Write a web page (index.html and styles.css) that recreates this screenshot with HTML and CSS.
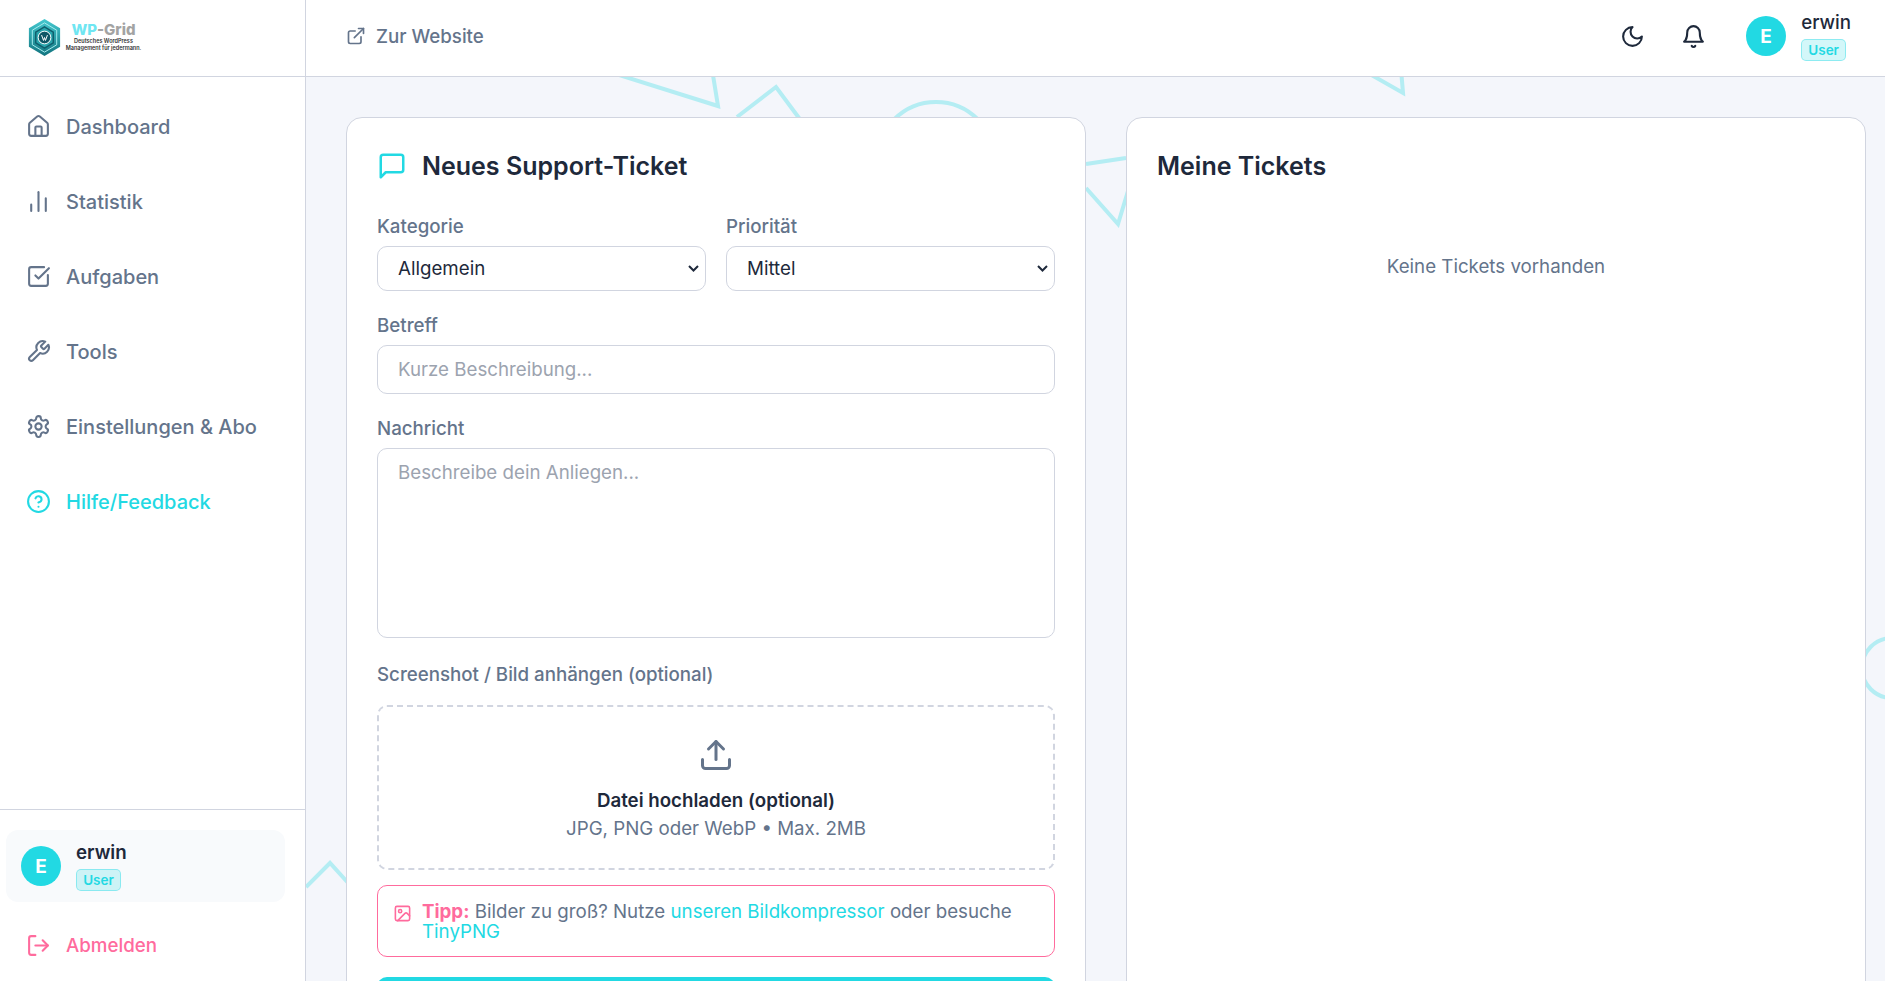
FILE: index.html
```html
<!DOCTYPE html>
<html lang="de">
<head>
  <meta charset="UTF-8">
  <title>Support - WP-Grid</title>
  <link rel="stylesheet" href="styles.css">
</head>
<body>
  <div class="app-shell">
    <aside class="sidebar">
      <div class="logo-bar">
        <svg class="logo-mark" viewBox="0 0 40 40" aria-hidden="true">
          <defs>
            <linearGradient id="logoFill" x1="0" y1="0" x2="0" y2="1">
              <stop offset="0" stop-color="#45c9d0"/>
              <stop offset="1" stop-color="#12747f"/>
            </linearGradient>
          </defs>
          <polygon points="20,1 36,10.500 36,29.500 20,39 4,29.500 4,10.500" fill="url(#logoFill)"/>
          <polygon points="20,5 32.500,12.500 32.500,27.500 20,35 7.500,27.500 7.500,12.500" fill="none" stroke="#a8eef0" stroke-width="1"/>
          <polygon points="20,9 29,14.500 29,25.500 20,31 11,25.500 11,14.500" fill="#2aa5ad" stroke="#0f5e6c" stroke-width="1.500"/>
          <circle cx="20" cy="20" r="6.500" fill="#0f5666" stroke="#fff" stroke-width="1"/>
          <path d="M17 17.500l2 5.500 1-3 1 3 2-5.500" fill="none" stroke="#fff" stroke-width="1"/>
        </svg>
        <div class="logo-text">
          <div class="logo-name"><span class="logo-wp">WP</span>-Grid</div>
          <div class="logo-sub">Deutsches WordPress</div>
          <div class="logo-sub">Management für jedermann.</div>
        </div>
      </div>
      <nav class="side-nav">
        <a class="nav-item" href="#">
          <svg class="icon" viewBox="0 0 24 24"><path d="M15 21v-8a1 1 0 0 0-1-1h-4a1 1 0 0 0-1 1v8"/><path d="M3 10a2 2 0 0 1 .709-1.528l7-5.999a2 2 0 0 1 2.582 0l7 5.999A2 2 0 0 1 21 10v9a2 2 0 0 1-2 2H5a2 2 0 0 1-2-2z"/></svg>
          Dashboard
        </a>
        <a class="nav-item" href="#">
          <svg class="icon" viewBox="0 0 24 24"><path d="M5 21v-6"/><path d="M12 21V3"/><path d="M19 21V9"/></svg>
          Statistik
        </a>
        <a class="nav-item" href="#">
          <svg class="icon" viewBox="0 0 24 24"><path d="M21 10.656V19a2 2 0 0 1-2 2H5a2 2 0 0 1-2-2V5a2 2 0 0 1 2-2h12.344"/><path d="m9 11 3 3L22 4"/></svg>
          Aufgaben
        </a>
        <a class="nav-item" href="#">
          <svg class="icon" viewBox="0 0 24 24"><path d="M14.700 6.300a1 1 0 0 0 0 1.400l1.600 1.600a1 1 0 0 0 1.400 0l3.770-3.770a6 6 0 0 1-7.940 7.940l-6.910 6.910a2.120 2.120 0 0 1-3-3l6.910-6.910a6 6 0 0 1 7.940-7.940l-3.760 3.760z"/></svg>
          Tools
        </a>
        <a class="nav-item" href="#">
          <svg class="icon" viewBox="0 0 24 24"><path d="M12.220 2h-.44a2 2 0 0 0-2 2v.18a2 2 0 0 1-1 1.730l-.43.25a2 2 0 0 1-2 0l-.15-.08a2 2 0 0 0-2.730.73l-.22.38a2 2 0 0 0 .73 2.730l.15.1a2 2 0 0 1 1 1.720v.51a2 2 0 0 1-1 1.740l-.15.09a2 2 0 0 0-.73 2.730l.22.38a2 2 0 0 0 2.730.73l.15-.08a2 2 0 0 1 2 0l.43.25a2 2 0 0 1 1 1.730V20a2 2 0 0 0 2 2h.44a2 2 0 0 0 2-2v-.18a2 2 0 0 1 1-1.730l.43-.25a2 2 0 0 1 2 0l.15.08a2 2 0 0 0 2.730-.73l.22-.39a2 2 0 0 0-.73-2.730l-.15-.08a2 2 0 0 1-1-1.740v-.5a2 2 0 0 1 1-1.740l.15-.09a2 2 0 0 0 .73-2.730l-.22-.38a2 2 0 0 0-2.730-.73l-.15.08a2 2 0 0 1-2 0l-.43-.25a2 2 0 0 1-1-1.730V4a2 2 0 0 0-2-2z"/><circle cx="12" cy="12" r="3"/></svg>
          Einstellungen &amp; Abo
        </a>
        <a class="nav-item nav-active" href="#">
          <svg class="icon" viewBox="0 0 24 24"><circle cx="12" cy="12" r="10"/><path d="M9.090 9a3 3 0 0 1 5.830 1c0 2-3 3-3 3"/><path d="M12 17h.01"/></svg>
          Hilfe/Feedback
        </a>
      </nav>
      <div class="side-foot">
        <div class="user-box">
          <div class="avatar">E</div>
          <div class="user-meta">
            <div class="user-name">erwin</div>
            <span class="role-badge">User</span>
          </div>
        </div>
        <a class="nav-item nav-logout" href="#">
          <svg class="icon" viewBox="0 0 24 24"><path d="M9 21H5a2 2 0 0 1-2-2V5a2 2 0 0 1 2-2h4"/><path d="m16 17 5-5-5-5"/><path d="M21 12H9"/></svg>
          Abmelden
        </a>
      </div>
    </aside>

    <div class="main-col">
      <header class="top-bar">
        <a class="site-link" href="#">
          <svg class="icon icon-site" viewBox="0 0 24 24"><path d="M15 3h6v6"/><path d="M10 14 21 3"/><path d="M18 13v6a2 2 0 0 1-2 2H5a2 2 0 0 1-2-2V8a2 2 0 0 1 2-2h6"/></svg>
          Zur Website
        </a>
        <div class="top-actions">
          <svg class="icon icon-top" viewBox="0 0 24 24"><path d="M12 3a6 6 0 0 0 9 9 9 9 0 1 1-9-9Z"/></svg>
          <svg class="icon icon-top" viewBox="0 0 24 24"><path d="M6 8a6 6 0 0 1 12 0c0 7 3 9 3 9H3s3-2 3-9"/><path d="M10.300 21a1.940 1.940 0 0 0 3.400 0"/></svg>
          <div class="top-user">
            <div class="avatar">E</div>
            <div class="user-meta">
              <div class="user-name user-name-top">erwin</div>
              <span class="role-badge">User</span>
            </div>
          </div>
        </div>
      </header>

      <main class="content">
        <!-- background shapes, page coordinates minus the sidebar and top bar -->
        <svg class="bg-shapes" viewBox="0 0 1579 904" aria-hidden="true">
          <path d="M294 -8 L412 29 L406 -8"/>
          <path d="M431 40 L470 10 L496 45"/>
          <circle cx="630" cy="84" r="59"/>
          <path d="M780 87 L820 81"/>
          <path d="M780 111 L812 147 L822 114"/>
          <path d="M1055 -8 L1097 16 L1095 -8"/>
          <circle cx="1586" cy="591" r="30"/>
          <path d="M0 810 L24 786 L44 808"/>
        </svg>
        <div class="ticket-grid">
          <section class="card">
            <h2 class="card-title">
              <svg class="icon icon-title" viewBox="0 0 24 24"><path d="M21 15a2 2 0 0 1-2 2H7l-4 4V5a2 2 0 0 1 2-2h14a2 2 0 0 1 2 2z"/></svg>
              Neues Support-Ticket
            </h2>
            <form onsubmit="return false;">
              <div class="field-row">
                <div class="field">
                  <label for="category">Kategorie</label>
                  <div class="select-wrap">
                    <select id="category"><option>Allgemein</option></select>
                    <svg class="select-arrow" viewBox="0 0 11 7"><path d="M1 1l4.500 4.500L10 1"/></svg>
                  </div>
                </div>
                <div class="field">
                  <label for="priority">Priorität</label>
                  <div class="select-wrap">
                    <select id="priority"><option>Mittel</option></select>
                    <svg class="select-arrow" viewBox="0 0 11 7"><path d="M1 1l4.500 4.500L10 1"/></svg>
                  </div>
                </div>
              </div>
              <div class="field">
                <label for="subject">Betreff</label>
                <input id="subject" type="text" placeholder="Kurze Beschreibung...">
              </div>
              <div class="field">
                <label for="message">Nachricht</label>
                <textarea id="message" placeholder="Beschreibe dein Anliegen..."></textarea>
              </div>
              <div class="field field-upload">
                <label>Screenshot / Bild anhängen (optional)</label>
                <div class="drop-zone">
                  <svg class="icon icon-upload" viewBox="0 0 24 24"><path d="M21 15v4a2 2 0 0 1-2 2H5a2 2 0 0 1-2-2v-4"/><polyline points="17 8 12 3 7 8"/><line x1="12" y1="3" x2="12" y2="15"/></svg>
                  <div class="drop-title">Datei hochladen (optional)</div>
                  <div class="drop-hint">JPG, PNG oder WebP • Max. 2MB</div>
                </div>
              </div>
              <div class="tip-box">
                <svg class="icon icon-tip" viewBox="0 0 24 24"><rect x="3" y="3" width="18" height="18" rx="2"/><circle cx="9" cy="9" r="2"/><path d="m21 15-3.086-3.086a2 2 0 0 0-2.828 0L6 21"/></svg>
                <p><strong>Tipp:</strong> Bilder zu groß? Nutze <a href="#">unseren Bildkompressor</a> oder besuche <a href="#">TinyPNG</a></p>
              </div>
              <button class="submit-btn" type="submit" aria-label="Absenden"></button>
            </form>
          </section>

          <section class="card">
            <h2 class="card-title">Meine Tickets</h2>
            <p class="empty-note">Keine Tickets vorhanden</p>
          </section>
        </div>
      </main>
    </div>
  </div>
</body>
</html>
```

FILE: styles.css
```css
* {
  box-sizing: border-box;
}
html, body {
  height: 100%;
  margin: 0;
  overflow: hidden;
}
body {
  font-family: Inter, 'Noto Sans', sans-serif;
  color: #1e293b;
  background: #f4f6fb;
}
a {
  text-decoration: none;
}
.icon {
  width: 25px;
  height: 25px;
  flex: none;
  fill: none;
  stroke: currentColor;
  stroke-width: 2;
  stroke-linecap: round;
  stroke-linejoin: round;
}
.app-shell {
  display: flex;
  height: 100vh;
}

/* sidebar */
.sidebar {
  flex: 0 0 306px;
  display: flex;
  flex-direction: column;
  background: #fff;
  border-right: 1px solid #d1d5e0;
}
.logo-bar {
  height: 77px;
  flex: none;
  display: flex;
  align-items: center;
  gap: 1px;
  padding: 0 0 2px 25px;
  border-bottom: 1px solid #d1d5e0;
}
.logo-mark {
  width: 39px;
  height: 39px;
}
.logo-text {
  text-align: center;
  width: 77px;
  white-space: nowrap;
}
.logo-name {
  font-size: 15px;
  line-height: 16px;
  font-weight: 800;
  color: #a3a3a3;
}
.logo-wp {
  color: #6fe6f2;
}
.logo-sub {
  font-size: 5.500px;
  line-height: 7.500px;
  font-weight: 600;
  color: #333;
}
.side-nav {
  flex: 1;
  padding: 12px 0 0 0;
}
.nav-item {
  display: flex;
  align-items: center;
  gap: 15px;
  height: 75px;
  padding-left: 26px;
  color: #64748b;
  font-size: 20px;
  font-weight: 500;
}
.nav-active {
  color: #22d9e3;
}
.nav-logout {
  color: #ff6b9d;
  height: 48px;
  margin-left: -6px;
  font-size: 18.720px;
}
.side-foot {
  border-top: 1px solid #d1d5e0;
  padding: 20px 20px 12px 6px;
}
.user-box {
  display: flex;
  align-items: center;
  gap: 15px;
  height: 72px;
  padding-left: 15px;
  margin-bottom: 19px;
  background: #f8fafc;
  border-radius: 12px;
}
.avatar {
  width: 40px;
  height: 40px;
  flex: none;
  border-radius: 50%;
  background: #22d9e3;
  color: #fff;
  font-size: 19px;
  font-weight: 700;
  display: flex;
  align-items: center;
  justify-content: center;
}
.user-name {
  font-size: 18.720px;
  line-height: 22px;
  font-weight: 600;
  color: #1e293b;
}
.user-name-top {
  font-weight: 500;
}
.role-badge {
  display: block;
  width: 45px;
  height: 22px;
  margin-top: 5px;
  font-size: 13.500px;
  line-height: 20px;
  font-weight: 600;
  text-align: center;
  color: #22d9e3;
  background: rgba(34, 217, 227, 0.2);
  border: 1px solid rgba(34, 217, 227, 0.4);
  border-radius: 5px;
}

/* top bar */
.main-col {
  flex: 1;
  min-width: 0;
  display: flex;
  flex-direction: column;
}
.top-bar {
  height: 77px;
  flex: none;
  display: flex;
  align-items: center;
  justify-content: space-between;
  padding: 0 34px 4px 40px;
  background: #fff;
  border-bottom: 1px solid #d1d5e0;
}
.site-link {
  display: flex;
  align-items: center;
  gap: 10px;
  color: #64748b;
  font-size: 18.720px;
  font-weight: 500;
}
.icon-site {
  width: 20px;
  height: 20px;
}
.top-actions {
  display: flex;
  align-items: center;
  color: #1e293b;
}
.icon-top {
  margin-right: 36px;
}
.top-user {
  display: flex;
  align-items: center;
  gap: 15px;
  margin-left: 4px;
}

/* content */
.content {
  flex: 1;
  min-height: 0;
  position: relative;
  overflow: hidden;
  padding: 40px 19px 0 40px;
}
.bg-shapes {
  position: absolute;
  left: 0;
  top: 0;
  width: 1579px;
  height: 904px;
  fill: none;
  stroke: #22d9e3;
  stroke-width: 4;
  opacity: 0.3;
}
.ticket-grid {
  position: relative;
  display: grid;
  grid-template-columns: 1fr 1fr;
  gap: 40px;
  align-items: start;
}
.card {
  min-height: 1100px;
  padding: 30px;
  background: #fff;
  border: 1px solid #d1d5e0;
  border-radius: 16px;
}
.card-title {
  display: flex;
  align-items: center;
  gap: 15px;
  margin: 0 0 31px 0;
  font-size: 25px;
  line-height: 36px;
  font-weight: 600;
  color: #1e293b;
}
.icon-title {
  width: 30px;
  height: 30px;
  color: #22d9e3;
}
.field {
  display: flex;
  flex-direction: column;
  margin-bottom: 23px;
}
.field-row {
  display: grid;
  grid-template-columns: 1fr 1fr;
  gap: 20px;
}
.field label {
  margin-bottom: 7px;
  font-size: 18.720px;
  line-height: 24px;
  font-weight: 500;
  color: #64748b;
}
select, input, textarea {
  width: 100%;
  font-family: inherit;
  font-size: 18.720px;
  color: #1e293b;
  background: #fff;
  border: 1px solid #d1d5e0;
  border-radius: 10px;
}
.select-wrap {
  position: relative;
}
select {
  display: block;
  height: 45px;
  padding: 0 20px;
  appearance: none;
}
.select-arrow {
  position: absolute;
  right: 7px;
  top: 19px;
  width: 11px;
  height: 7px;
  fill: none;
  stroke: #1e293b;
  stroke-width: 2;
}
input {
  height: 49px;
  padding: 0 20px;
}
textarea {
  display: block;
  height: 190px;
  padding: 12px 20px;
  resize: none;
}
input::placeholder, textarea::placeholder {
  color: #9ca3af;
}
.field-upload {
  margin: 25px 0 15px 0;
}
.field-upload label {
  margin-bottom: 18px;
}
.drop-zone {
  height: 165px;
  display: flex;
  flex-direction: column;
  align-items: center;
  padding-top: 30px;
  border: 2px dashed #d1d5e0;
  border-radius: 10px;
  text-align: center;
}
.icon-upload {
  width: 36px;
  height: 36px;
  color: #64748b;
}
.drop-title {
  margin-top: 15px;
  font-size: 18.720px;
  line-height: 26px;
  font-weight: 600;
  color: #1e293b;
}
.drop-hint {
  margin-top: 2px;
  font-size: 18.720px;
  line-height: 26px;
  color: #64748b;
}
.tip-box {
  display: flex;
  align-items: flex-start;
  gap: 10px;
  height: 72px;
  margin: 0 0 20px 0;
  padding: 16px 16px 0 15px;
  border: 1px solid #ff6b9d;
  border-radius: 10px;
}
.tip-box p {
  margin: 0;
  font-size: 18.720px;
  line-height: 20px;
  color: #64748b;
}
.tip-box strong {
  color: #ff6b9d;
}
.tip-box a {
  color: #22d9e3;
}
.icon-tip {
  width: 19px;
  height: 19px;
  margin-top: 2px;
  color: #ff6b9d;
}
.submit-btn {
  display: block;
  width: 100%;
  height: 52px;
  border: none;
  border-radius: 10px;
  background: #22d9e3;
}
.empty-note {
  margin: 70px 0 0 0;
  text-align: center;
  font-size: 18.720px;
  line-height: 26px;
  color: #64748b;
}
```
